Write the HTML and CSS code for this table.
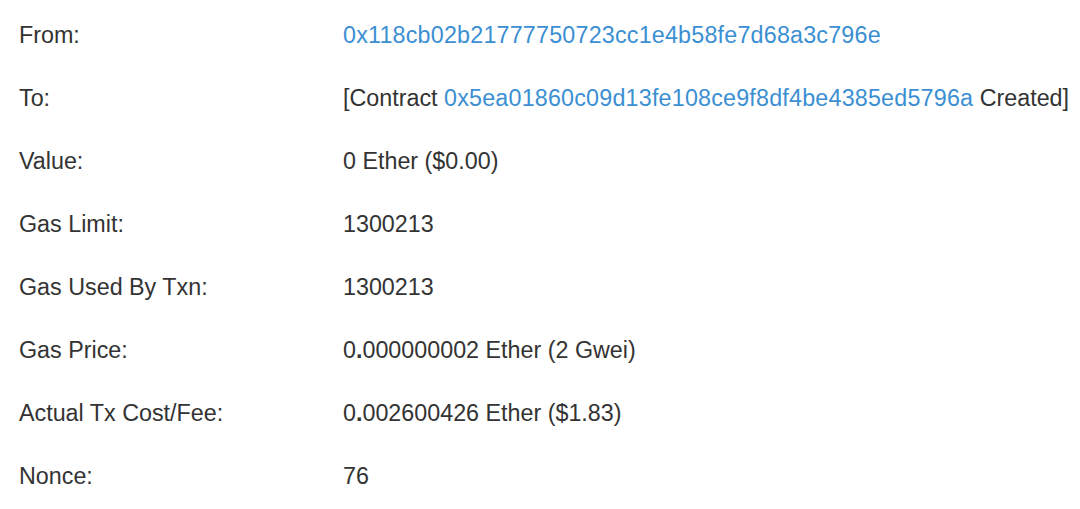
FILE: index.html
```html
<!DOCTYPE html>
<html lang="en">
<head>
<meta charset="utf-8">
<title>Transaction</title>
<link rel="stylesheet" href="styles.css">
</head>
<body>
<div class="details">
  <div class="row"><div class="label">From:</div><div class="value"><a class="link" href="#">0x118cb02b21777750723cc1e4b58fe7d68a3c796e</a></div></div>
  <div class="row"><div class="label">To:</div><div class="value">[Contract <a class="link" href="#">0x5ea01860c09d13fe108ce9f8df4be4385ed5796a</a> Created]</div></div>
  <div class="row"><div class="label">Value:</div><div class="value">0 Ether ($0.00)</div></div>
  <div class="row"><div class="label">Gas Limit:</div><div class="value">1300213</div></div>
  <div class="row"><div class="label">Gas Used By Txn:</div><div class="value">1300213</div></div>
  <div class="row"><div class="label">Gas Price:</div><div class="value">0<b class="dot">.</b>000000002 Ether (2 Gwei)</div></div>
  <div class="row"><div class="label">Actual Tx Cost/Fee:</div><div class="value">0<b class="dot">.</b>002600426 Ether ($1.83)</div></div>
  <div class="row"><div class="label">Nonce:</div><div class="value">76</div></div>
</div>
</body>
</html>
```
FILE: styles.css
```css
html, body {
  margin: 0;
  padding: 0;
  background: #ffffff;
}
body {
  font-family: "Liberation Sans", Arial, Helvetica, sans-serif;
  font-size: 23.3px;
  color: #333333;
}
.details {
  padding: 3.5px 0 0 19px;
}
.row {
  display: grid;
  grid-template-columns: 324px 1fr;
  height: 63.14px;
  line-height: 63.14px;
  white-space: nowrap;
}
.link {
  color: #3b8fd2;
  text-decoration: none;
  letter-spacing: 0.2px;
}
.dot {
  font-weight: bold;
}
```
